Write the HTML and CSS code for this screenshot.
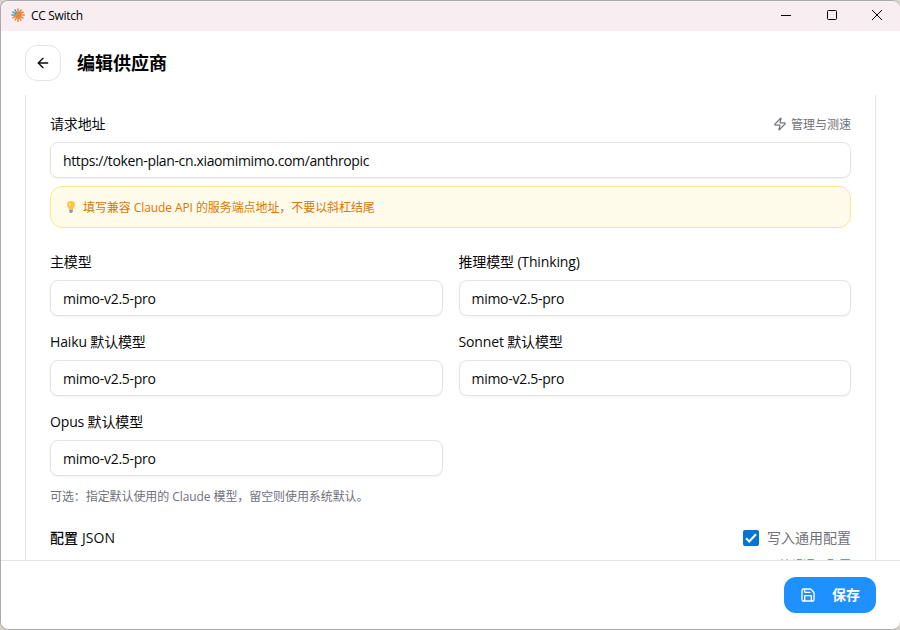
FILE: index.html
```html
<!DOCTYPE html>
<html lang="zh-CN">
<head>
  <meta charset="UTF-8">
  <title>CC Switch</title>
  <link rel="stylesheet" href="styles.css">
</head>
<body>
  <div class="window">
    <div class="titlebar">
      <svg class="app-icon" width="14" height="14" viewBox="0 0 14 14" fill="none" stroke-width="1.5" stroke-linecap="round">
        <path stroke="#e8843c" d="M7 7V1M7 7l3-5M7 7l5.2-3M7 7h6.3M7 7l5 3.2M7 7l2.8 5.2M7 7v6.2M7 7l-2.8 5M7 7l-5 2.8"/>
        <path stroke="#5a9fa5" d="M4.8 5.6L1.8 4M5.6 4.8L4 1.8M4.6 7H.8"/>
        <circle cx="7" cy="7" r="2" fill="#e8843c"/>
      </svg>
      <span class="app-name">CC Switch</span>
      <div class="window-buttons">
        <svg width="12" height="12" viewBox="0 0 12 12" fill="none" stroke="#000"><path d="M1 6.5h10"/></svg>
        <svg width="12" height="12" viewBox="0 0 12 12" fill="none" stroke="#000"><rect x="1.5" y="1.500" width="9" height="9" rx="1"/></svg>
        <svg width="12" height="12" viewBox="0 0 12 12" fill="none" stroke="#000"><path d="M1 1l10 10M11 1L1 11"/></svg>
      </div>
    </div>

    <div class="header">
      <button class="back">
        <svg width="16" height="16" viewBox="0 0 24 24" fill="none" stroke="currentColor" stroke-width="2" stroke-linecap="round" stroke-linejoin="round"><path d="m12 19-7-7 7-7"/><path d="M19 12H5"/></svg>
      </button>
      <h2>编辑供应商</h2>
    </div>

    <div class="content">
      <div class="card">
        <div class="row">
          <label for="url">请求地址</label>
          <button class="speed">
            <svg width="14" height="14" viewBox="0 0 24 24" fill="none" stroke="currentColor" stroke-width="2" stroke-linecap="round" stroke-linejoin="round"><path d="M4 14a1 1 0 0 1-.78-1.63l9.9-10.2a.5.5 0 0 1 .86.46l-1.92 6.02A1 1 0 0 0 13 10h7a1 1 0 0 1 .78 1.63l-9.9 10.2a.5.5 0 0 1-.86-.46l1.92-6.02A1 1 0 0 0 11 14z"/></svg>
            <span>管理与测速</span>
          </button>
        </div>
        <input type="text" id="url" class="url" value="https://token-plan-cn.xiaomimimo.com/anthropic">
        <div class="hint">
          <svg width="12" height="14" viewBox="0 0 12 14">
            <path fill="#fcc53c" d="M6 1a4 4 0 0 0-4 4c0 1.800 1.800 2.700 2 4.500h4c.2-1.800 2-2.700 2-4.500a4 4 0 0 0-4-4z"/>
            <path fill="#ffe9a0" d="M4 3.200h1.600v2.600H4z"/>
            <path fill="#9b9aa5" d="M4.200 9.500h3.600v2.200L6.800 13H5.200l-1-1.300z"/>
          </svg>
          <span>填写兼容 Claude API 的服务端点地址，不要以斜杠结尾</span>
        </div>

        <div class="models">
          <div class="field">
            <label for="main">主模型</label>
            <input type="text" id="main" value="mimo-v2.5-pro">
          </div>
          <div class="field">
            <label for="thinking">推理模型 (Thinking)</label>
            <input type="text" id="thinking" value="mimo-v2.5-pro">
          </div>
          <div class="field">
            <label for="haiku">Haiku 默认模型</label>
            <input type="text" id="haiku" value="mimo-v2.5-pro">
          </div>
          <div class="field">
            <label for="sonnet">Sonnet 默认模型</label>
            <input type="text" id="sonnet" value="mimo-v2.5-pro">
          </div>
          <div class="field">
            <label for="opus">Opus 默认模型</label>
            <input type="text" id="opus" value="mimo-v2.5-pro">
          </div>
        </div>
        <p class="note">可选：指定默认使用的 Claude 模型，留空则使用系统默认。</p>

        <div class="row config-row">
          <label class="config-label">配置 JSON</label>
          <div class="common">
            <span class="checkbox">
              <svg width="16" height="16" viewBox="0 0 16 16" fill="none" stroke="#fff" stroke-width="2.200"><path d="M3 8.300l3.200 3.200L13 4.200"/></svg>
            </span>
            <span class="common-text">写入通用配置</span>
          </div>
        </div>
        <div class="edit-common">编辑通用配置</div>
      </div>
    </div>

    <div class="footer">
      <button class="save">
        <svg width="16" height="16" viewBox="0 0 24 24" fill="none" stroke="currentColor" stroke-width="2" stroke-linecap="round" stroke-linejoin="round"><path d="M15.200 3a2 2 0 0 1 1.400.6l3.800 3.800a2 2 0 0 1 .6 1.400V19a2 2 0 0 1-2 2H5a2 2 0 0 1-2-2V5a2 2 0 0 1 2-2z"/><path d="M17 21v-7a1 1 0 0 0-1-1H8a1 1 0 0 0-1 1v7"/><path d="M7 3v4a1 1 0 0 0 1 1h7"/></svg>
        <span>保存</span>
      </button>
    </div>
  </div>
</body>
</html>
```

FILE: styles.css
```css
* {
  box-sizing: border-box;
}
body {
  margin: 0;
  height: 630px;
  overflow: hidden;
  background: #d9d4cc;
  color: #0a0a0a;
  font-family: "Open Sans", "Noto Sans CJK SC", sans-serif;
  font-size: 14px;
}
.window {
  display: flex;
  flex-direction: column;
  height: 630px;
  border: 1px solid #ababab;
  border-right: none;
  border-radius: 8px;
  background: #fff;
  overflow: hidden;
}
.titlebar {
  display: flex;
  align-items: center;
  flex: none;
  height: 30px;
  padding: 0 17px 2px 10px;
  background: #f8eef2;
}
.app-name {
  margin-left: 6px;
  font-size: 12px;
  letter-spacing: -0.3px;
  color: #000;
}
.window-buttons {
  display: flex;
  gap: 33.5px;
  margin-left: auto;
}
.window-buttons svg {
  display: block;
}
.header {
  display: flex;
  align-items: center;
  flex: none;
  gap: 16px;
  height: 64px;
  padding: 0 24px;
}
.back {
  display: flex;
  align-items: center;
  justify-content: center;
  width: 36px;
  height: 36px;
  padding: 0;
  border: 1px solid #e4e4e7;
  border-radius: 12px;
  background: #fff;
  color: #0a0a0a;
}
h2 {
  margin: 0;
  font-size: 18px;
  line-height: 28px;
  font-weight: 700;
  color: #000;
}
.content {
  flex: 1;
  min-height: 0;
  padding: 0 24px;
  overflow: hidden;
}
.card {
  height: 520px;
  padding: 19px 24px 0;
  border: 1px solid #e4e4e7;
  border-top: none;
}
.row {
  display: flex;
  align-items: center;
  justify-content: space-between;
  height: 20px;
}
label {
  display: block;
  line-height: 20px;
  letter-spacing: -0.15px;
}
.speed {
  display: flex;
  align-items: center;
  gap: 4px;
  padding: 0;
  border: none;
  background: none;
  color: #71717a;
  font: inherit;
  font-size: 12px;
}
input {
  display: block;
  width: 100%;
  height: 36px;
  padding: 0 12px;
  border: 1px solid #e4e4e7;
  border-radius: 8px;
  background: #fff;
  box-shadow: 0 1px 2px rgba(0, 0, 0, 0.06);
  color: #0a0a0a;
  font: inherit;
  letter-spacing: -0.28px;
}
.url {
  margin-top: 8px;
  letter-spacing: -0.36px;
}
.hint {
  display: flex;
  align-items: center;
  gap: 6px;
  height: 42px;
  margin-top: 8px;
  padding: 0 14px;
  border: 1px solid #fde68a;
  border-radius: 12px;
  background: #fffbeb;
  color: #d97706;
  font-size: 12px;
  letter-spacing: -0.08px;
}
.models {
  display: grid;
  grid-template-columns: 1fr 1fr;
  gap: 16px;
  margin-top: 24px;
}
.field input {
  margin-top: 8px;
}
.note {
  margin: 13px 0 0;
  color: #71717a;
  font-size: 12px;
  line-height: 16px;
  letter-spacing: -0.08px;
}
.config-row {
  margin-top: 23px;
}
.config-label {
  font-weight: 500;
  letter-spacing: 0.1px;
}
.common {
  display: flex;
  align-items: center;
  gap: 8px;
  color: #71717a;
}
.common-text {
  padding-bottom: 2px;
}
.checkbox {
  width: 16px;
  height: 16px;
  border-radius: 2px;
  background: #0075d4;
}
.checkbox svg {
  display: block;
}
.edit-common {
  margin-top: 10px;
  text-align: right;
  color: #3b82f6;
  font-size: 12px;
  line-height: 16px;
}
.footer {
  display: flex;
  align-items: center;
  justify-content: flex-end;
  flex: none;
  height: 69px;
  padding: 0 24px;
  border-top: 1px solid #e4e4e7;
}
.save {
  display: flex;
  align-items: center;
  gap: 16px;
  height: 36px;
  padding: 0 16px;
  border: none;
  border-radius: 12px;
  background: #1e90ff;
  color: #fff;
  font: inherit;
  font-weight: 600;
}
.save span {
  padding-bottom: 2px;
}
```
